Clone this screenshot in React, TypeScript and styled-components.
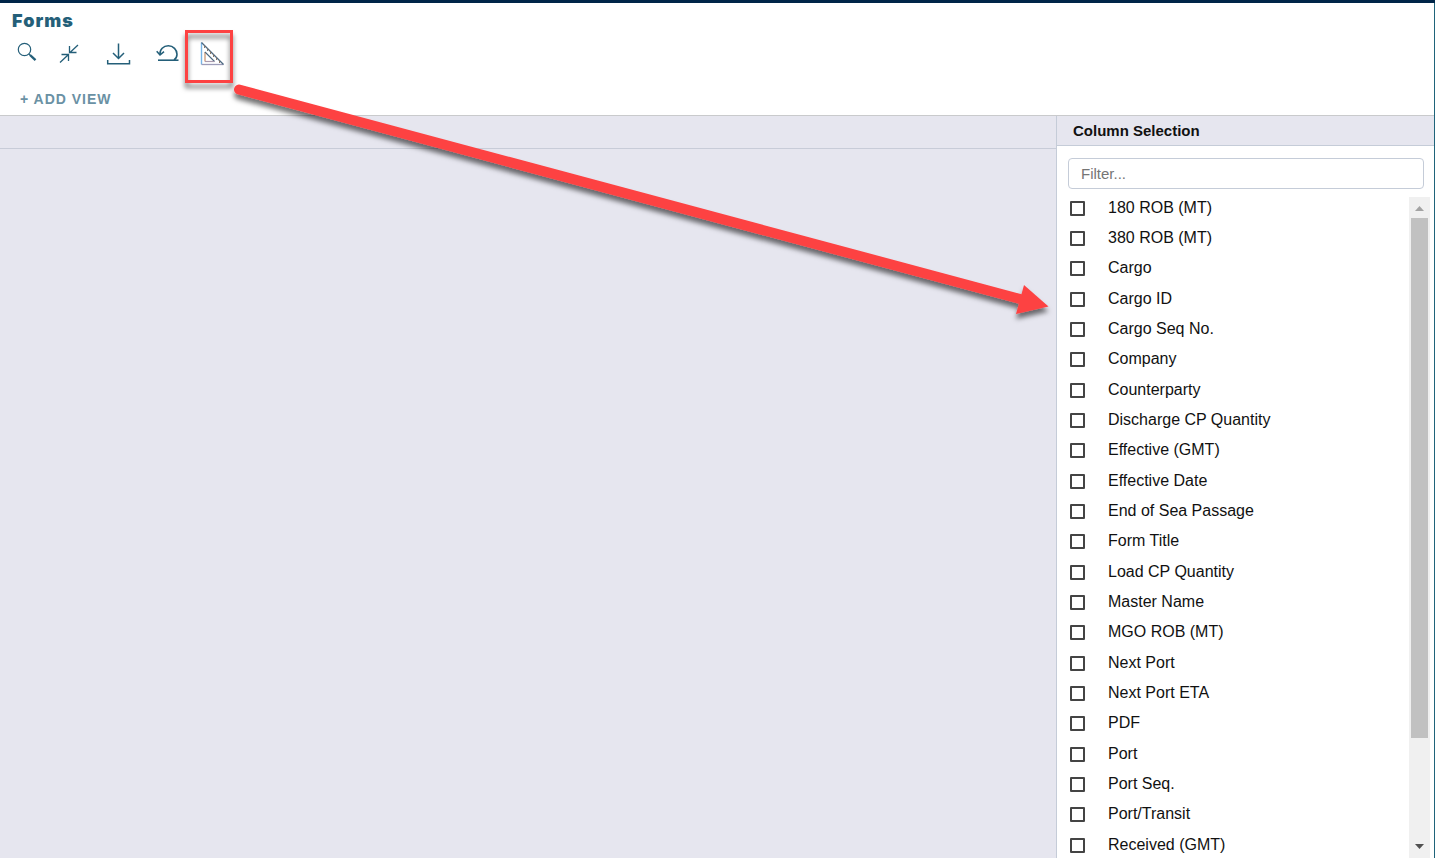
import React from "react";
import styled, { createGlobalStyle } from "styled-components";

const GlobalStyle = createGlobalStyle`
  *, *::before, *::after { box-sizing: border-box; }
  body {
    margin: 0;
    background: #fff;
    color: #111;
    font-family: "Liberation Sans", Arial, sans-serif;
  }
`;

const Page = styled.div`
  position: relative;
  display: flex;
  flex-direction: column;
  height: 100vh;
  overflow: hidden;
  border-top: 3px solid #002548;
`;

const Frame = styled.div`
  display: flex;
  flex: 1;
  flex-direction: column;
  min-height: 0;
  border-right: 1px solid #1f647a;
`;

const Header = styled.header`
  display: flex;
  flex-direction: column;
  border-bottom: 1px solid #c9cacc;
`;

const Title = styled.h1`
  margin: 0;
  padding: 6px 12px 0;
  color: #245f79;
  font-family: Inter, sans-serif;
  font-size: 18px;
  font-weight: 900;
  line-height: 24px;
  letter-spacing: 1px;
`;

const Toolbar = styled.div`
  display: flex;
  align-items: center;
  height: 40px;
  padding-left: 12px;
`;

const ToolButton = styled.button<{ $gap?: number }>`
  display: flex;
  align-items: center;
  justify-content: center;
  width: 30px;
  height: 30px;
  margin: 0 ${(p) => p.$gap ?? 0}px 0 0;
  padding: 0;
  border: 0;
  background: none;
  color: #245f79;
`;

const Icon = styled.svg`
  display: block;
  width: 26px;
  height: 26px;
  fill: none;
  stroke: currentColor;
`;

const AddView = styled.button`
  align-self: flex-start;
  height: 42px;
  padding: 10px 20px 0;
  border: 0;
  background: none;
  color: #6a91a4;
  font-family: inherit;
  font-size: 14px;
  font-weight: 700;
  line-height: 20px;
  letter-spacing: 1px;
`;

const Body = styled.div`
  display: flex;
  flex: 1;
  min-height: 0;
`;

const Grid = styled.main`
  flex: 1;
  background: #e6e6ef;
`;

const GridHeader = styled.div`
  height: 33px;
  border-bottom: 1px solid #c8ccd8;
`;

const Panel = styled.aside`
  display: flex;
  flex-direction: column;
  width: 378px;
  border-left: 1px solid #c5ccd8;
  background: #fff;
`;

const PanelTitle = styled.h2`
  margin: 0;
  padding: 0 16px;
  border-bottom: 1px solid #c5ccd8;
  background: #e6e6ef;
  font-size: 15px;
  font-weight: 700;
  line-height: 29px;
`;

const Filter = styled.input`
  height: 31px;
  margin: 12px 10px 8px 11px;
  padding: 0 12px;
  border: 1px solid #c5ccd8;
  border-radius: 4px;
  background: #fff;
  font-family: inherit;
  font-size: 15px;
  &::placeholder {
    color: #757575;
    opacity: 1;
  }
`;

const ListArea = styled.div`
  display: flex;
  flex: 1;
  min-height: 0;
  padding-right: 4px;
`;

const List = styled.ul`
  flex: 1;
  margin: 0;
  padding: 0 0 0 13px;
  overflow: hidden;
  list-style: none;
`;

const Row = styled.li`
  height: 30px;
  &:nth-child(3n) {
    height: 31px;
  }
`;

const RowLabel = styled.label`
  display: flex;
  align-items: center;
  gap: 23px;
  font-size: 16px;
  line-height: 22px;
`;

const Check = styled.input`
  width: 15px;
  height: 15px;
  margin: 0;
  appearance: none;
  border: 2px solid #444;
  border-radius: 1px;
  background: #fff;
  &:checked {
    background: #444;
  }
`;

const Scrollbar = styled.div`
  display: flex;
  flex-direction: column;
  width: 21px;
  background: #f0f0f0;
`;

const ScrollButton = styled.button<{ $down?: boolean }>`
  display: flex;
  align-items: center;
  justify-content: center;
  height: 21px;
  padding: ${(p) => (p.$down ? "0 0 2px" : "2px 0 0")};
  border: 0;
  background: none;
  color: ${(p) => (p.$down ? "#505050" : "#a3a3a3")};
`;

const Track = styled.div`
  flex: 1;
  padding: 0 2px;
`;

const Thumb = styled.div`
  height: 84%;
  background: #c1c1c1;
`;

const Callout = styled.svg`
  position: absolute;
  top: -3px;
  left: 0;
  width: 1060px;
  height: 340px;
  overflow: visible;
  pointer-events: none;
`;

const columns = [
  "180 ROB (MT)",
  "380 ROB (MT)",
  "Cargo",
  "Cargo ID",
  "Cargo Seq No.",
  "Company",
  "Counterparty",
  "Discharge CP Quantity",
  "Effective (GMT)",
  "Effective Date",
  "End of Sea Passage",
  "Form Title",
  "Load CP Quantity",
  "Master Name",
  "MGO ROB (MT)",
  "Next Port",
  "Next Port ETA",
  "PDF",
  "Port",
  "Port Seq.",
  "Port/Transit",
  "Received (GMT)",
];

export default function App() {
  return (
    <Page>
      <GlobalStyle />
      <Frame>
        <Header>
          <Title>Forms</Title>
          <Toolbar>
            <ToolButton $gap={12} aria-label="Search">
              <Icon viewBox="0 0 26 26">
                <circle cx="10.5" cy="9.5" r="6.2" strokeWidth="1.2" />
                <path d="M14.8 13.8l1.5 1.5" strokeWidth="1.2" />
                <path d="M16 15l5.5 5.2" strokeWidth="2.4" />
              </Icon>
            </ToolButton>
            <ToolButton $gap={19} aria-label="Collapse">
              <Icon viewBox="0 0 26 26" strokeWidth="1.3">
                <path d="M22 5l-8 7.5M13.5 6v6.5H20.500M4 22.500l8-7.500M5.500 14.500H12.500V21" />
              </Icon>
            </ToolButton>
            <ToolButton $gap={19} aria-label="Download">
              <Icon viewBox="0 0 26 26">
                <path d="M13.500 3.500v15M8 13l5.500 5.500 5.500-5.500" strokeWidth="1.5" />
                <path d="M2.700 20v3.800h21.800v-3.800" strokeWidth="1.5" />
              </Icon>
            </ToolButton>
            <ToolButton $gap={15} aria-label="Reset">
              <Icon viewBox="0 0 26 26" strokeWidth="1.6">
                <path d="M6 14.500C5.500 9.500 9.500 5.800 14.300 5.800c5 0 8.700 4 8.700 8.500 0 2.400-1.200 4.500-3 5.700" />
                <path d="M2.700 11.300L6 15l4-3.300" />
                <path d="M4 20.200h20.500" />
              </Icon>
            </ToolButton>
            <ToolButton aria-label="Column selection">
              <Icon viewBox="0 0 26 26">
                <path d="M2.500 24.500V2.500" stroke="#78b4e6" strokeWidth="1.4" />
                <path d="M2.500 24.500H24.500" stroke="#9c9cb8" strokeWidth="1.3" />
                <path d="M2.500 2.500l22 22" stroke="#4c6880" strokeWidth="1.2" />
                <path
                  d="M5.500 5.500v2.500M8.500 8.500v2.500M11.500 11.500v2.500M14.500 14.500v2.500M17.500 17.500v2.500M20.500 20.500v2.500"
                  stroke="#8a7768"
                  strokeWidth="1"
                />
                <path d="M6 21.500V12" stroke="#c78f68" strokeWidth="1.2" />
                <path d="M6 12L15.500 21.500" stroke="#4c6880" strokeWidth="1.1" />
                <path d="M6 21.500H15.500" stroke="#a99aae" strokeWidth="1.2" />
              </Icon>
            </ToolButton>
          </Toolbar>
          <AddView>+ ADD VIEW</AddView>
        </Header>
        <Body>
          <Grid>
            <GridHeader />
          </Grid>
          <Panel>
            <PanelTitle>Column Selection</PanelTitle>
            <Filter placeholder="Filter..." aria-label="Filter columns" />
            <ListArea>
              <List>
                {columns.map((name) => (
                  <Row key={name}>
                    <RowLabel>
                      <Check type="checkbox" />
                      {name}
                    </RowLabel>
                  </Row>
                ))}
              </List>
              <Scrollbar>
                <ScrollButton aria-label="Scroll up">
                  <svg width="9" height="5" viewBox="0 0 9 5" fill="currentColor">
                    <path d="M0 5L4.500 0 9 5z" />
                  </svg>
                </ScrollButton>
                <Track>
                  <Thumb />
                </Track>
                <ScrollButton $down aria-label="Scroll down">
                  <svg width="9" height="5" viewBox="0 0 9 5" fill="currentColor">
                    <path d="M0 0L4.500 5 9 0z" />
                  </svg>
                </ScrollButton>
              </Scrollbar>
            </ListArea>
          </Panel>
        </Body>
      </Frame>
      <Callout viewBox="0 0 1060 340" aria-hidden="true">
        <defs>
          <filter id="shadow" filterUnits="userSpaceOnUse" x="0" y="0" width="1080" height="360">
            <feDropShadow dx="0" dy="5" stdDeviation="2.500" floodColor="#000" floodOpacity="0.55" />
          </filter>
        </defs>
        <g filter="url(#shadow)">
          <rect x="186.500" y="31.500" width="45" height="50" fill="none" stroke="#fd4343" strokeWidth="3" />
          <path d="M239 89.500L1022 299.500" stroke="#fd4343" strokeWidth="10" strokeLinecap="round" />
          <path d="M1048.500 306.500L1024 285l-8 29z" fill="#fd4343" />
        </g>
      </Callout>
    </Page>
  );
}
